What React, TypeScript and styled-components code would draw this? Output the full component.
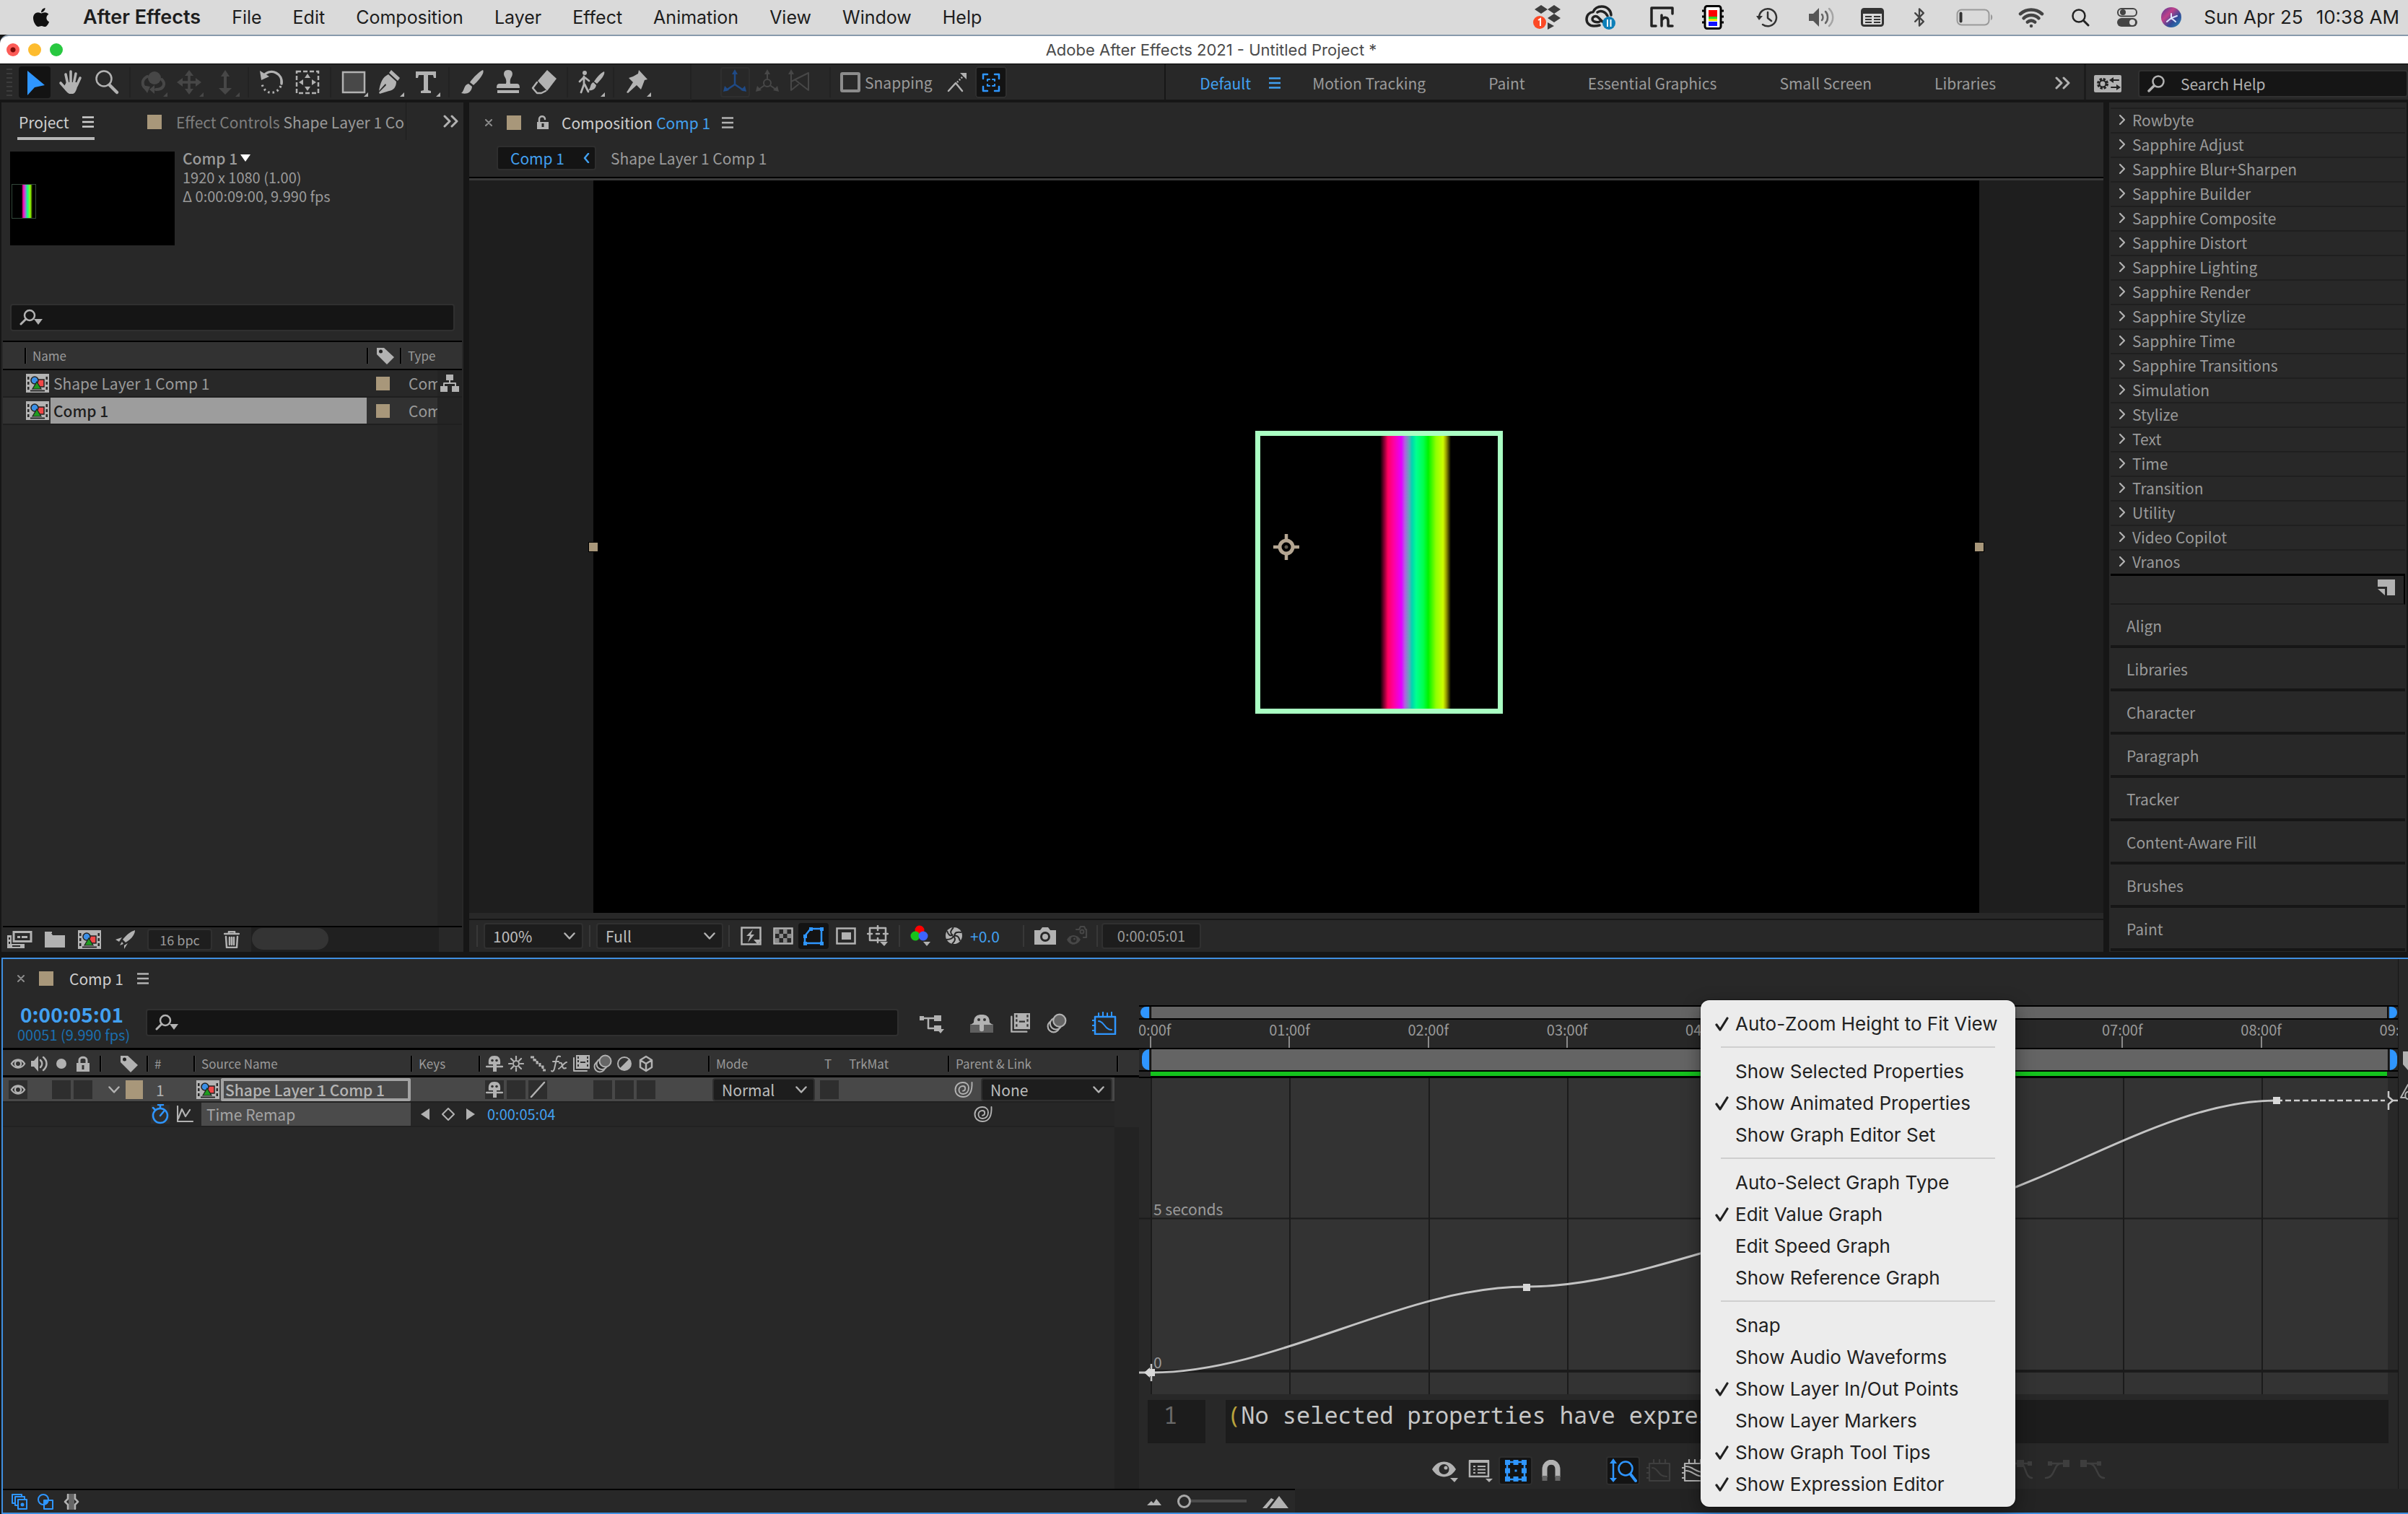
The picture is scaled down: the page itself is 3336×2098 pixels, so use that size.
import React, { ReactNode } from "react";
import styled, { createGlobalStyle, css } from "styled-components";
import { FaApple } from "react-icons/fa";
import { Bluetooth, Wifi } from "lucide-react";

const ui = `"Noto Sans CJK SC", "Noto Sans", sans-serif`;
const mac = `Inter, "Liberation Sans", sans-serif`;

const c = {
  panel: "#282828",
  gap: "#161616",
  head: "#323232",
  text: "#9a9a9a",
  bright: "#cfcfcf",
  icon: "#b2b2b2",
  dim: "#474747",
  blue: "#42a0f0",
  accent: "#2f96ff",
  frame: "#3f8fe0",
  tan: "#a8977a",
};

const Global = createGlobalStyle`
  *, *::before, *::after { box-sizing: border-box; }
  body { margin: 0; background: ${c.gap}; color: ${c.text}; font: 21px/26px ${ui}; }
  button, input, select, table { font: inherit; color: inherit; }
  button { border: 0; margin: 0; padding: 0; background: none; text-align: left; white-space: nowrap; }
  ul { list-style: none; margin: 0; padding: 0; }
  svg { display: block; flex: none; }
`;

const Shell = styled.div`
  display: flex;
  flex-direction: column;
  height: 100vh;
  overflow: hidden;
`;

/* ---------- system menu bar ---------- */

const MenuBar = styled.nav`
  display: flex;
  align-items: center;
  height: 48px;
  flex: none;
  padding: 0 12px 1px 42px;
  background: #dadada;
  color: #1d1d1d;
  font: 26px/30px ${mac};
`;
const Menus = styled.div`
  display: flex;
  align-items: baseline;
  gap: 43px;
  margin-left: 43px;
  flex: 1;
  font-size: 25px;
`;
const MenuButton = styled.button<{ $bold?: boolean }>`
  font-size: ${(p) => (p.$bold ? 27 : 25)}px;
  font-weight: ${(p) => (p.$bold ? 600 : 400)};
`;
const Status = styled.span<{ $gap: number }>`
  display: flex;
  margin-left: ${(p) => p.$gap}px;
  white-space: nowrap;
`;
const TitleBar = styled.header`
  display: grid;
  grid-template-columns: 1fr auto 1fr;
  align-items: center;
  height: 40px;
  flex: none;
  padding: 0 0 1px 20px;
  border-top: 2px solid #8799ab;
  border-top-left-radius: 12px;
  background: #fff;
  color: #4b4b4b;
  font: 22px/28px ${mac};
`;
const Lights = styled.div`
  display: flex;
  gap: 12px;
  margin-left: -11px;
`;
const Light = styled.button<{ $color: string; $dot?: boolean }>`
  width: 18px;
  height: 18px;
  border-radius: 50%;
  background: ${(p) =>
    p.$dot ? `radial-gradient(circle, #7a0a08 3px, ${p.$color} 4px)` : p.$color};
`;

/* ---------- tool bar ---------- */

const ToolBar = styled.div`
  display: flex;
  align-items: center;
  height: 50px;
  flex: none;
  border-top: 1px solid #000;
  background: ${c.panel};
`;
const Grip = styled.span`
  width: 8px;
  height: 38px;
  margin: 0 6px 0 9px;
  background: repeating-linear-gradient(#3c3c3c 0 2px, transparent 2px 6px);
`;
const Tool = styled.button<{ $on?: boolean; $dim?: boolean; $narrow?: boolean; $boxed?: boolean }>`
  display: flex;
  justify-content: center;
  align-items: center;
  flex: none;
  width: ${(p) => (p.$narrow ? 45 : 50)}px;
  height: 46px;
  color: ${(p) => (p.$on ? c.accent : p.$dim ? c.dim : c.icon)};
  > svg {
    border-radius: 4px;
    background: ${(p) => (p.$on ? "#131313" : "none")};
    box-shadow: ${(p) => (p.$boxed ? "inset 0 0 0 2px #2f2f2f" : "none")};
  }
`;
const Sep = styled.span<{ $w?: number; $h?: number; $c?: string }>`
  display: flex;
  justify-content: center;
  flex: none;
  width: ${(p) => p.$w || 14}px;
  height: ${(p) => p.$h || 42}px;
  &::before {
    content: "";
    width: 2px;
    background: ${(p) => p.$c || "#222"};
  }
`;
const Snapping = styled.label`
  display: flex;
  align-items: center;
  gap: 6px;
  margin-right: 20px;
`;
const Check = styled.input`
  appearance: none;
  width: 28px;
  height: 28px;
  margin: 0;
  border: 4px solid #8c8c8c;
  border-radius: 3px;
`;
const Workspaces = styled.div`
  display: flex;
  align-items: center;
  align-self: stretch;
  gap: 87px;
  margin-left: auto;
  padding: 2px 18px 0 47px;
  border-left: 2px solid #171717;
`;
const WsButton = styled.button<{ $on?: boolean; $more?: boolean }>`
  display: flex;
  align-items: center;
  gap: 25px;
  margin-right: ${(p) => (p.$on ? -43 : 0)}px;
  margin-left: ${(p) => (p.$more ? -5 : 0)}px;
  color: ${(p) => (p.$on ? c.blue : c.text)};
`;
const HelpArea = styled.div`
  display: flex;
  align-items: center;
  align-self: stretch;
  gap: 23px;
  width: 449px;
  padding: 4px 0 0 11px;
  border-left: 3px solid #1c1c1c;
`;
const Field = styled.label<{ $h: number; $pad?: number }>`
  display: flex;
  align-items: center;
  flex: 1;
  gap: 22px;
  height: ${(p) => p.$h}px;
  padding-left: ${(p) => p.$pad || 11}px;
  border: 2px solid #303030;
  border-radius: 4px;
  background: #151515;
`;
const FieldInput = styled.input`
  flex: 1;
  min-width: 0;
  padding: 0;
  border: 0;
  outline: 0;
  background: none;
  &::placeholder {
    color: #b0b0b0;
    opacity: 1;
  }
`;

/* ---------- workspace ---------- */

const Workspace = styled.main`
  display: grid;
  grid-template-columns: 640px minmax(0, 1fr) 412px;
  gap: 8px;
  flex: 1;
  min-height: 0;
  margin: 4px 2px 8px;
`;
const Panel = styled.section`
  display: flex;
  flex-direction: column;
  min-width: 0;
  min-height: 0;
  background: ${c.panel};
`;
const ProjectTabs = styled.div`
  display: flex;
  height: 52px;
  padding-left: 22px;
`;
const ProjectTab = styled.button`
  display: flex;
  align-items: center;
  gap: 18px;
  width: 107px;
  padding: 5px 0 0 2px;
  border-bottom: 4px solid #b8b8b8;
  color: ${c.bright};
`;
const EffectTab = styled.button`
  display: flex;
  align-items: center;
  gap: 20px;
  width: 359px;
  margin: 0 0 0 73px;
  padding-top: 2px;
  overflow: hidden;
  border-right: 1px solid #1d1d1d;
`;
const Swatch = styled.span<{ $w?: number; $h?: number }>`
  flex: none;
  width: ${(p) => p.$w || 20}px;
  height: ${(p) => p.$h || 20}px;
  background: ${c.tan};
`;
const Soft = styled.span`
  color: #7e7e7e;
`;
const MoreTabs = styled.button`
  display: flex;
  align-items: center;
  margin-left: 51px;
`;
const ItemInfo = styled.div`
  display: flex;
  gap: 11px;
  height: 212px;
  padding: 16px 0 0 12px;
`;
const Thumb = styled.div`
  width: 228px;
  height: 130px;
  padding: 45px 0 0 2px;
  background: #000;
`;
const ThumbShape = styled.div`
  width: 34px;
  height: 48px;
  border: 1px solid #33483b;
  background: linear-gradient(90deg, #000 13px, #f0a 15px, #a6d 18px, #1f8 21px, #9f0 25px, #000 28px);
`;
const InfoLines = styled.div`
  font-size: 20px;
  line-height: 26px;
  margin-top: -5px;
`;
const InfoTitle = styled.button`
  display: flex;
  align-items: center;
  gap: 4px;
  height: 28px;
  font-size: 21px;
  font-weight: 500;
`;
const SearchRow = styled.div`
  display: flex;
  height: 66px;
  padding: 15px 12px 0;
`;
const ProjectTable = styled.table`
  width: 636px;
  margin: 0 2px;
  border-collapse: collapse;
  table-layout: fixed;
`;
const HeadRow = styled.tr`
  height: 39px;
  background: ${c.head};
  border-top: 2px solid #000;
  border-bottom: 2px solid #000;
  font-size: 17px;
`;
const Th = styled.th<{ $pad?: number }>`
  padding: 0 0 0 ${(p) => p.$pad || 0}px;
  font-weight: 400;
`;
const BarCell = styled.span<{ $gap?: number }>`
  display: flex;
  align-items: center;
  gap: ${(p) => p.$gap || 8}px;
  &::before {
    content: "";
    width: 3px;
    height: 22px;
    background: #000;
    border-right: 1px solid #444;
  }
`;
const ItemRow = styled.tr<{ $on?: boolean }>`
  height: 38px;
  border-bottom: 2px solid #1f1f1f;
  background: ${(p) => (p.$on ? "linear-gradient(90deg, #313131 602px, #242424 602px)" : "linear-gradient(90deg, #282828 602px, #242424 602px)")};
`;
const Td = styled.td<{ $pad?: number; $hi?: boolean }>`
  padding: 0 0 0 ${(p) => p.$pad || 0}px;
  overflow: hidden;
  white-space: nowrap;
  ${(p) =>
    p.$hi &&
    css`
      background: #9d9d9d;
      color: #1e1e1e;
      font-weight: 500;
    `}
`;
const ListSpace = styled.div`
  flex: 1;
  margin: 0 2px;
  border-right: 34px solid #242424;
`;
const ProjectFooter = styled.div`
  display: flex;
  align-items: center;
  gap: 16px;
  height: 36px;
  margin: 0 2px;
  padding-left: 6px;
  border-top: 2px solid #000;
  font-size: 18px;
`;
const Depth = styled.button`
  width: 90px;
  height: 30px;
  border: 2px solid #303030;
  border-radius: 4px;
  background: #1e1e1e;
  font-size: 18px;
  text-align: center;
`;
const HScroll = styled.div`
  align-self: stretch;
  width: 260px;
  padding: 1px;
  background: #202020;
  &::before {
    content: "";
    display: block;
    width: 106px;
    height: 30px;
    border-radius: 15px;
    background: #343434;
  }
`;

/* ---------- composition viewer ---------- */

const ViewerTabs = styled.div`
  display: flex;
  align-items: center;
  height: 56px;
  padding-left: 22px;
`;
const Title = styled.h2<{ $before: number; $after: number }>`
  margin: 0 ${(p) => p.$after}px 0 ${(p) => p.$before}px;
  font: inherit;
  color: ${c.bright};
  em {
    margin-left: 5px;
    font-style: normal;
    color: ${c.blue};
  }
`;
const Gap = styled.span<{ $w: number }>`
  flex: none;
  width: ${(p) => p.$w}px;
`;
const Crumbs = styled.div`
  display: flex;
  align-items: center;
  gap: 20px;
  height: 52px;
  padding: 0 0 8px 38px;
  border-bottom: 3px solid #3a3a3a;
  box-shadow: inset 0 -2px #000;
`;
const Crumb = styled.button`
  display: flex;
  align-items: center;
  justify-content: space-between;
  width: 138px;
  height: 34px;
  padding: 0 7px 0 17px;
  border: 2px solid #2e2e2e;
  border-radius: 4px;
  background: #141414;
  color: ${c.blue};
`;
const Viewport = styled.div`
  display: flex;
  justify-content: center;
  flex: 1;
  min-height: 0;
  background: #1e1e1e;
`;
const Stage = styled.div`
  position: relative;
  width: 1920px;
  max-width: 100%;
  background: #000;
`;
const ShapeLayer = styled.div`
  position: absolute;
  left: calc(50% - 43px);
  top: calc(50% - 161px);
  width: 343px;
  height: 392px;
  padding-left: 166px;
  border: 7px solid #aaffc3;
`;
const Spectrum = styled.div`
  width: 98px;
  height: 100%;
  background: linear-gradient(90deg, #000 0%, #ff0060 11%, #ff00a0 19%, #e400ff 30%, #b060e0 35%, #60a8b8 41%, #00d4b0 45%, #00ff90 51%, #00ff50 61%, #00f400 68%, #90ff00 79%, #ccff00 89%, #a0a800 93%, #000 100%);
`;
const Handle = styled.span<{ $side: "left" | "right" }>`
  position: absolute;
  ${(p) => p.$side}: -7px;
  top: calc(50% - 7px);
  width: 14px;
  height: 14px;
  border: 1px solid #000;
  background: ${c.tan};
`;
const AnchorPoint = styled.svg`
  position: absolute;
  left: calc(50% - 19px);
  top: calc(50% - 19px);
`;
const ViewerBar = styled.div`
  display: flex;
  align-items: center;
  height: 54px;
  padding: 9px 0 0 2px;
  background: linear-gradient(#282828 8px, #161616 8px 10px, #282828 10px);
`;
const SelectBox = styled.span<{ $w: number; $h?: number }>`
  display: grid;
  align-items: center;
  width: ${(p) => p.$w}px;
  height: ${(p) => p.$h || 36}px;
  border: 2px solid #303030;
  border-radius: 4px;
  background: #1d1d1d;
  color: #bdbdbd;
  > * {
    grid-area: 1 / 1;
  }
  > svg {
    justify-self: end;
    margin-right: 9px;
    pointer-events: none;
  }
`;
const Select = styled.select`
  appearance: none;
  width: 100%;
  padding: 0 0 0 11px;
  border: 0;
  background: none;
`;
const ViewButton = styled.button<{ $on?: boolean; $w?: number; $dim?: boolean }>`
  display: flex;
  justify-content: center;
  align-items: center;
  width: ${(p) => p.$w || 40}px;
  height: 36px;
  border-radius: 4px;
  background: ${(p) => (p.$on ? "#131313" : "none")};
  color: ${(p) => (p.$on ? c.accent : p.$dim ? c.dim : c.icon)};
`;
const Exposure = styled.button`
  width: 52px;
  color: ${c.blue};
`;
const TimeBox = styled.button`
  width: 138px;
  height: 36px;
  border: 2px solid #303030;
  border-radius: 4px;
  background: #1d1d1d;
  font-size: 20px;
  text-align: center;
`;

/* ---------- right column ---------- */

const EffectList = styled.ul`
  margin: 7px 2px 0;
  border-bottom: 3px solid #000;
`;
const EffectButton = styled.button`
  display: flex;
  align-items: center;
  gap: 10px;
  width: 100%;
  height: 34px;
  padding: 0 0 3px 12px;
  border-top: 2px solid #1f1f1f;
`;
const PresetBar = styled.div`
  display: flex;
  justify-content: flex-end;
  align-items: center;
  height: 40px;
  margin: 0 2px;
  padding: 0 12px 6px 0;
  border-right: 2px solid #000;
  border-bottom: 2px solid #1c1c1c;
`;
const StackButton = styled.button`
  width: calc(100% - 4px);
  height: 60px;
  margin: 0 2px;
  padding: 2px 0 0 22px;
  border-bottom: 4px solid #161616;
`;

/* ---------- timeline ---------- */

const Timeline = styled.section`
  position: relative;
  flex: none;
  display: flex;
  flex-direction: column;
  margin-left: 2px;
  border: 2px solid ${c.frame};
  border-right: 0;
  background: ${c.panel};
`;
const TimelineBody = styled.div`
  display: grid;
  grid-template-columns: 1574px minmax(0, 1fr) 13px;
`;
const TimelineTabs = styled.div`
  display: flex;
  align-items: center;
  height: 54px;
  padding-left: 20px;
`;
const Layers = styled.div`
  display: flex;
  flex-direction: column;
`;
const ClockRow = styled.div`
  display: flex;
  align-items: center;
  height: 69px;
  padding-right: 31px;
`;
const Clock = styled.div`
  width: 198px;
  padding: 0 0 1px 20px;
  font-size: 20px;
  line-height: 24px;
  color: #1b6fae;
`;
const ClockMain = styled.button`
  display: block;
  margin-left: 4px;
  height: 33px;
  font-size: 28px;
  line-height: 32px;
  font-weight: 700;
  color: ${c.blue};
`;
const LayerSearch = styled.div`
  display: flex;
  width: 1043px;
  margin: 0 29px 0 0;
  padding-bottom: 1px;
`;
const LayerTools = styled.div`
  display: flex;
  flex: 1;
  justify-content: space-between;
  align-items: center;
  color: ${c.icon};
`;
const ToolTrio = styled.div`
  display: flex;
  align-items: center;
  gap: 22px;
`;
const cols = `134px 65px 65px 301px 94px 318px 332px 234px 1fr`;
const ColumnHead = styled.div`
  display: grid;
  grid-template-columns: ${cols};
  align-items: center;
  height: 41px;
  padding-top: 2px;
  border-top: 3px solid #000;
  border-bottom: 3px solid #000;
  background: ${c.head};
  font-size: 17px;
`;
const Cells = styled.span<{ $pad?: number }>`
  display: flex;
  align-items: center;
  padding-left: ${(p) => p.$pad || 0}px;
`;
const Cell = styled.button<{ $box?: boolean }>`
  display: flex;
  justify-content: center;
  align-items: center;
  width: 26px;
  height: 26px;
  margin: 0 2px;
  color: ${c.icon};
  background: ${(p) => (p.$box ? "#2e2e2e" : "none")};
`;
const LayerRow = styled.div`
  display: grid;
  grid-template-columns: ${cols};
  align-items: center;
  height: 33px;
  margin: 0 34px 0 0;
  background: #484848;
  color: #b4b4b4;
`;
const NameInput = styled.input`
  width: 263px;
  height: 32px;
  margin-left: 2px;
  padding: 0 2px;
  border: 4px solid #a3a3a3;
  border-radius: 2px;
  outline: 0;
  background: #484848;
  font-weight: 500;
`;
const PropRow = styled.div`
  display: flex;
  align-items: center;
  height: 36px;
  margin-right: 34px;
  padding-left: 203px;
  border-top: 2px solid #212121;
  border-bottom: 2px solid #212121;
  background: #262626;
  color: ${c.icon};
`;
const PropName = styled.button`
  width: 290px;
  height: 32px;
  margin: 0 14px 0 10px;
  padding-left: 7px;
  background: #4b4b4b;
  color: #a4a4a4;
`;
const Keys = styled.div`
  display: flex;
  align-items: center;
  justify-content: space-between;
  width: 75px;
  margin-right: 17px;
`;
const Value = styled.button`
  width: 674px;
  font-size: 20px;
  color: ${c.blue};
`;
const LayerSpace = styled.div`
  flex: 1;
  border-right: 34px solid #232323;
`;
const Graph = styled.div`
  display: flex;
  flex-direction: column;
  min-width: 0;
  padding-top: 64px;
  border-right: 1px solid #161616;
`;
const NavBar = styled.div<{ $h: number; $work?: boolean }>`
  display: flex;
  height: ${(p) => p.$h}px;
  padding: 0 1px 0 ${(p) => (p.$work ? 4 : 2)}px;
  border-top: 2px solid #000;
  border-bottom: 2px solid #000;
`;
const End = styled.span<{ $right?: boolean; $w: number }>`
  width: ${(p) => p.$w}px;
  background: ${c.accent};
  border-radius: ${(p) => (p.$right ? "0 10px 10px 0" : "10px 0 0 10px")};
`;
const Span = styled.span`
  flex: 1;
  margin: 0 2px;
  border: 0 solid #000;
  border-width: 0 1px;
  background: #646464;
`;
const Ruler = styled.div`
  height: 39px;
  overflow: hidden;
`;
const Ticks = styled.div`
  display: grid;
  grid-template-columns: repeat(10, 1fr);
  margin: 0 -99px 0 -80px;
`;
const Tick = styled.span`
  display: flex;
  flex-direction: column;
  align-items: center;
  font-size: 20px;
  line-height: 28px;
  &::after {
    content: "";
    width: 2px;
    height: 16px;
    margin-top: -5px;
    background: #8a8a8a;
  }
`;
const Cache = styled.div`
  height: 7px;
  margin: 0 15px 0 16px;
  border-bottom: 1px solid #000;
  background: #15c21e;
`;
const ChartBox = styled.div`
  height: 440px;
  border-top: 2px solid #000;
`;
const Expression = styled.div`
  display: flex;
  gap: 28px;
  height: 60px;
  margin: 8px 13px 0 12px;
  font: 32px/42px "Noto Sans Mono", "Liberation Mono", monospace;
`;
const LineNo = styled.span`
  width: 80px;
  padding-left: 22px;
  background: #1c1c1c;
  color: #6a6a6a;
`;
const Code = styled.code`
  flex: 1;
  padding-left: 2px;
  background: #1c1c1c;
  color: #c6c6c6;
  font: inherit;
  white-space: nowrap;
  overflow: hidden;
  b {
    font-weight: 400;
    color: #b8a23c;
  }
`;
const GraphTools = styled.div`
  display: flex;
  justify-content: center;
  align-items: center;
  height: 63px;
  padding-top: 12px;
`;
const GraphTool = styled.button<{ $on?: boolean; $dim?: boolean }>`
  display: flex;
  justify-content: center;
  align-items: center;
  width: 47px;
  height: 40px;
  margin: 0 1px;
  border-radius: 4px;
  border: ${(p) => (p.$on ? "2px solid #2e2e2e" : "0")};
  background: ${(p) => (p.$on ? "#131313" : "none")};
  color: ${(p) => (p.$on ? c.accent : p.$dim ? "#3e3e3e" : c.icon)};
`;
const SideStrip = styled.div`
  display: flex;
  flex-direction: column;
  align-items: flex-end;
  padding-top: 128px;
  gap: 18px;
  color: ${c.icon};
  overflow: hidden;
`;
const BottomBar = styled.div`
  display: flex;
  height: 33px;
  background: #232323;
`;
const BottomLeft = styled.div`
  display: flex;
  align-items: center;
  gap: 14px;
  width: 1790px;
  padding: 0 9px 0 12px;
  border-top: 2px solid #000;
  background: ${c.panel};
  color: ${c.accent};
`;
const Zoom = styled.label`
  display: flex;
  align-items: center;
  gap: 22px;
  margin-left: auto;
  color: ${c.icon};
`;
const ZoomRange = styled.input`
  appearance: none;
  width: 96px;
  height: 20px;
  margin: 0;
  background: linear-gradient(transparent 7px, #4a4a4a 7px 11px, transparent 11px);
  &::-webkit-slider-thumb {
    appearance: none;
    width: 19px;
    height: 19px;
    border: 3px solid #a8a8a8;
    border-radius: 50%;
    background: #282828;
  }
`;

/* ---------- pop-up menu ---------- */

const Popup = styled.ul`
  position: absolute;
  left: 2352px;
  bottom: 8px;
  width: 436px;
  padding: 10px 0;
  border-radius: 12px;
  background: #ececec;
  box-shadow: 0 0 2px #000, 0 8px 26px rgba(0, 0, 0, 0.4);
  color: #212121;
  font: 26px/42px ${mac};
`;
const PopupItem = styled.button`
  display: grid;
  grid-template-columns: 28px 1fr;
  align-items: center;
  width: 100%;
  height: 44px;
  padding: 2px 0 0 20px;
`;
const PopupRule = styled.li`
  display: flex;
  align-items: center;
  height: 22px;
  padding: 0 28px;
  &::before {
    content: "";
    flex: 1;
    height: 2px;
    background: #cfcfcf;
  }
`;

/* ---------- drawings ---------- */

type SvgProps = { w: number; h: number; box?: string; children: ReactNode; color?: string };
const Svg = ({ w, h, box, children, color }: SvgProps) => (
  <svg width={w} height={h} viewBox={box || `0 0 ${w} ${h}`} fill="none" stroke="none" color={color} aria-hidden="true">
    {children}
  </svg>
);
const P = ({ d, s, f, k }: { d: string; s?: number; f?: boolean; k?: string }) => (
  <path d={d} stroke={s ? k || "currentColor" : "none"} strokeWidth={s} fill={f || !s ? k || "currentColor" : "none"} strokeLinecap="round" strokeLinejoin="round" />
);
const Burger = ({ color = c.icon, w = 16 }) => (
  <Svg w={w} h={16} color={color}><path d={`M0 1.5H${w}M0 8H${w}M0 14.500H${w}`} stroke="currentColor" strokeWidth="2.500" /></Svg>
);
const CloseX = () => <Svg w={10} h={10} color="#8c8c8c"><P s={2} d="M1 1l8 8M9 1l-8 8" /></Svg>;
const DoubleChevron = () => <Svg w={22} h={18} color={c.icon}><P s={3} d="M2 2l7 7-7 7M12 2l7 7-7 7" /></Svg>;
const ChevronDown = () => <Svg w={16} h={10} color={c.icon}><P s={2.5} d="M1.500 1.500l6.500 7 6.500-7" /></Svg>;
const SearchMenu = () => (
  <Svg w={32} h={24} color={c.icon}>
    <circle cx="14" cy="9" r="7" stroke="currentColor" strokeWidth="2.500" />
    <P s={3} d="M9 14l-7 7" /><P d="M20 14h12l-6 8z" />
  </Svg>
);
const Magnifier = () => (
  <Svg w={24} h={24} color={c.icon}><circle cx="15" cy="9" r="7.500" stroke="currentColor" strokeWidth="2.500" /><P s={3.5} d="M9 15l-7 7" /></Svg>
);
const Tag = () => (
  <Svg w={26} h={24} color={c.icon}><path d="M1 1h10l14 13-10 10L1 10z" fill="currentColor" /><circle cx="6.500" cy="6" r="2.500" fill="#222" /></Svg>
);
const CompIcon = ({ w = 32, h = 26 }) => (
  <Svg w={w} h={h} box="0 0 32 26">
    <path d="M0 0h32v26H0z" fill="#b4b4b4" />
    <path d="M2 4h2.500v4H2zM2 11h2.500v4H2zM2 18h2.500v4H2zM27.500 4h2.500v4h-2.500zM27.500 11h2.500v4h-2.500zM27.500 18h2.500v4h-2.500z" fill="#282828" />
    <path d="M6 22.500h20v2H6z" fill="#282828" />
    <rect x="14" y="8" width="11" height="10" fill="#f04848" stroke="#222" strokeWidth="1.500" />
    <circle cx="12" cy="9" r="5" fill="#3b8fe6" stroke="#222" strokeWidth="1.500" />
    <path d="M15 11l6 10H9z" fill="#1f9a1f" stroke="#222" strokeWidth="1.200" />
  </Svg>
);
const FlowIcon = () => (
  <Svg w={26} h={24} color={c.icon}><P d="M8 0h10v8H8zM0 16h10v8H0zM16 16h10v8H16z" /><P s={2} d="M13 8v4M5 16v-4h16v4" /></Svg>
);
const Eye = ({ s = 24 }) => (
  <Svg w={s} h={s} box="0 0 24 24"><P s={2.5} d="M2 12c5-8 15-8 20 0-5 8-15 8-20 0z" /><circle cx="12" cy="12" r="4.500" stroke="currentColor" strokeWidth="2.500" /></Svg>
);
const Spiral = () => (
  <Svg w={26} h={24} color={c.icon}>
    <P s={1.9} d="M24.500 2C25 13 22 22 12.500 22 6 22 1.500 18 1.500 12S6 2 12 2c5 0 8 3 8 7.500 0 5-3 8.500-7.500 8.500C9 18 6.500 16 6.500 12.500S9 7 12 7c2 0 3.200 1.200 3.200 3 0 2.200-1.200 3.700-3.200 3.700" />
  </Svg>
);
const Shy = () => (
  <Svg w={24} h={24}><P d="M4 13C3 4 6 1 12 1s9 3 8 12h-5v10h-5V13z" /><P s={2.5} d="M1 16h8M15 16h8" /><circle cx="9" cy="7.500" r="1.800" fill="#333" /><circle cx="15" cy="7.500" r="1.800" fill="#333" /></Svg>
);
const FilmFrames = ({ w = 24, h = 24 }) => (
  <Svg w={w} h={h} box="0 0 24 24">
    <P s={2} d="M2 4v18h18" /><P d="M5 0h19v19H5z" />
    <P k="#333" d="M7 2h2v3H7zM7 7h2v3H7zM7 13h2v3H7zM20 2h2v3h-2zM20 7h2v3h-2zM20 13h2v3h-2zM11 9h7v2h-7z" />
  </Svg>
);
const Blur = ({ s = 26 }) => (
  <Svg w={s} h={s} box="0 0 26 26">
    <circle cx="9" cy="17" r="7.500" stroke="currentColor" strokeWidth="2" /><circle cx="12" cy="13.500" r="7.500" fill="#282828" stroke="currentColor" strokeWidth="2" />
    <circle cx="16.500" cy="9.500" r="8" fill="#666" stroke="currentColor" strokeWidth="2" />
  </Svg>
);
const Cube = () => <Svg w={20} h={24}><P s={2.5} d="M10 2l8 5v10l-8 5-8-5V7zM2 7l8 5 8-5M10 12v10" /></Svg>;
const GraphIcon = () => (
  <Svg w={34} h={32} color={c.accent}><P s={2.5} d="M4 7h28v24H4z" /><P s={2} d="M9 2v5M15 0v7M21 2v5M27 0v7M0 12h4M0 19h4M0 26h4M9 13c8 0 8 12 18 12" /></Svg>
);
const Tri = () => <path d="M38 32v6h-6z" fill="currentColor" />;
const T44 = ({ children }: { children: ReactNode }) => <Svg w={44} h={44} box="-4 -4 44 44">{children}</Svg>;

const toolArt: Record<string, ReactNode> = {
  Selection: <path d="M8 2l24 20-14 3-10 11z" fill="currentColor" />,
  Hand: <><P s={3.6} d="M11 7l3 14M18 3v18M25 6l-3 15M31 12l-5 11M4 19l8 9" /><P d="M12 18h14l1 6c-1 6-4 10-6 10h-5c-4-2-6-6-8-9z" /></>,
  Zoom: <><circle cx="14" cy="13" r="10.500" stroke="currentColor" strokeWidth="2.500" /><P s={4.5} d="M22 22l10 10" /></>,
  Orbit: <><circle cx="20" cy="12" r="9" fill="currentColor" /><P s={4} d="M10 10C2 14 2 22 8 27M30 14c6 6 3 14-8 14" /><P d="M2 22l12 2-4 9zM20 22v12l-7-6z" /><Tri /></>,
  Pan: <><P s={3.5} d="M18 5v26M5 18h26" /><P d="M18 1l6 8H12zM18 35l6-8H12zM1 18l8-6v12zM35 18l-8-6v12z" /><Tri /></>,
  Dolly: <><P s={4} d="M18 6v24" /><P d="M18 1l6 9H12zM18 35l9-9H9z" /><Tri /></>,
  Rotate: <><P s={3.5} d="M8 8C18-2 34 6 32 20" /><P d="M2 2l2 13 11-5z" /><path d="M31 23C26 36 8 36 5 20" stroke="currentColor" strokeWidth="3.200" strokeDasharray="2.500 4" /></>,
  "Pan Behind": <><path d="M3 3h30v30H3z" stroke="currentColor" strokeWidth="2.500" strokeDasharray="6 3" /><P d="M18 6l4 6h-8zM18 30l4-6h-8zM6 18l6-4v8zM30 18l-6-4v8z" /></>,
  Rectangle: <><path d="M3 4h30v28H3z" fill="#484848" stroke="currentColor" strokeWidth="2.500" /><Tri /></>,
  Pen: <><P d="M20 1l12 11-3 4-12-11zM16 7l11 10c0 8-4 12-10 13L4 34l-1-2 10-10-1-2L3 30c2-12 5-19 13-23z" /><Tri /></>,
  Type: <><P d="M4 3h28v9h-3l-1-4h-7v21l4 1v3H11v-3l4-1V8H8l-1 4H4z" /><Tri /></>,
  Brush: <><P d="M33 1c3 4-6 15-13 21l-5-4C20 11 28 3 33 1zM13 20l5 4c-1 9-8 11-15 9 5-4 3-11 10-13z" /></>,
  Stamp: <P d="M18 1c6 0 7 5 5 9-2 3-3 6-2 10h9c3 0 4 2 4 6H2c0-4 1-6 4-6h9c1-4 0-7-2-10-2-4-1-9 5-9zM3 29h30v4H3z" />,
  Eraser: <><P d="M22 1l13 12-13 17L9 16z" /><P s={2.5} d="M8 18l-6 8 6 7h6l6-3" /></>,
  Roto: <><circle cx="10" cy="5" r="3" fill="currentColor" /><P s={2.8} d="M9 10v11l-4 11M10 21l5 10M9 11l-6 6M11 12l5 4" /><P d="M37 3c2 4-5 12-10 17l-4-3c4-6 9-12 14-14zM22 18l4 4c-1 6-6 8-11 7 4-3 2-9 7-11z" /><Tri /></>,
  Puppet: <><P d="M21 1l12 13-4 1-3 8-2 5-6-6L6 33l-2-1 9-14-6-6 6-2 7-4z" /><Tri /></>,
};
const groups: [string, boolean][][] = [
  [["Selection", false], ["Hand", false], ["Zoom", false]],
  [["Orbit", true], ["Pan", true], ["Dolly", true]],
  [["Rotate", false], ["Pan Behind", false]],
  [["Rectangle", false], ["Pen", false], ["Type", false]],
  [["Brush", false], ["Stamp", false], ["Eraser", false]],
  [["Roto", false]],
  [["Puppet", false]],
];

const effects = ["Rowbyte", "Sapphire Adjust", "Sapphire Blur+Sharpen", "Sapphire Builder", "Sapphire Composite", "Sapphire Distort", "Sapphire Lighting", "Sapphire Render", "Sapphire Stylize", "Sapphire Time", "Sapphire Transitions", "Simulation", "Stylize", "Text", "Time", "Transition", "Utility", "Video Copilot", "Vranos"];
const stack = ["Align", "Libraries", "Character", "Paragraph", "Tracker", "Content-Aware Fill", "Brushes", "Paint"];
const popup: [string, boolean][][] = [
  [["Auto-Zoom Height to Fit View", true]],
  [["Show Selected Properties", false], ["Show Animated Properties", true], ["Show Graph Editor Set", false]],
  [["Auto-Select Graph Type", false], ["Edit Value Graph", true], ["Edit Speed Graph", false], ["Show Reference Graph", false]],
  [["Snap", false], ["Show Audio Waveforms", false], ["Show Layer In/Out Points", true], ["Show Layer Markers", false], ["Show Graph Tool Tips", true], ["Show Expression Editor", true]],
];

function StatusIcons() {
  return (
    <>
      <Status $gap={0}><Svg w={38} h={34}>
        <g fill="#3d3d3d"><path d="M11 0l9 6-9 6-9-6zM29 0l9 6-9 6-9-6zM29 12l9 6-9 6-9-6zM20 24l9 5-9 5z" /></g>
        <circle cx="9" cy="24" r="9" fill="#fb4a26" /><path d="M7 21l3-2v10" stroke="#fff" strokeWidth="2" />
      </Svg></Status>
      <Status $gap={34}><Svg w={42} h={34}>
        <P s={3.5} k="#222" d="M20 28c-3 1-5 1-8 1C6 29 2 25 2 19.500S6 10 11 9.500C13 5 17 2 23 2c8 0 13 6 13 12M20 23c-2 1-4 1-7 0-3-1-4-4-2-6s5-2 7 0l6 6M17 10c5-3 11-1 14 5" />
        <circle cx="33" cy="25" r="9" fill="#0d7fb8" /><path d="M31 20v10M35.500 20v10" stroke="#fff" strokeWidth="2" />
      </Svg></Status>
      <Status $gap={48}><Svg w={33} h={30}><P s={3.5} k="#222" d="M31 2H2v25h6M31 10V2M16 27V12M16 19c3-5 9-5 9 1v7h6" /></Svg></Status>
      <Status $gap={39}><Svg w={30} h={34}><rect x="4" y="1.500" width="22" height="31" rx="3" fill="#fff" stroke="#000" strokeWidth="3" /><path d="M0 8h4M0 16h4M0 24h4M26 8h4M26 16h4M26 24h4" stroke="#000" strokeWidth="3" /><path d="M9 7h12v9H9z" fill="red" /><path d="M9 16h12v3H9z" fill="#2bd52b" /><path d="M9 19h12v3H9z" fill="#e8e000" /><path d="M9 23h12v6H9z" fill="#11f" /></Svg></Status>
      <Status $gap={45}><Svg w={30} h={28}><P s={2.5} k="#333" d="M4 14a12 12 0 1 1 5 10M16 7v8l5 4" /><P k="#333" d="M0 12h9l-5 6z" /></Svg></Status>
      <Status $gap={42}><Svg w={37} h={28}><P k="#555" d="M1 9h6l8-8v26l-8-8H1z" /><P s={2.5} k="#666" d="M19 10c2 2 2 6 0 8M24 6c4 4 4 12 0 16" /><P s={2.5} k="#a5a5a5" d="M29 2c7 7 7 17 0 24" /></Svg></Status>
      <Status $gap={36}><Svg w={32} h={26}><rect x="1.500" y="1.500" width="29" height="23" rx="3" stroke="#333" strokeWidth="3" /><path d="M2 2h28v6H2z" fill="#333" /><path d="M6 12h9M6 16h9M6 20h9M18 12h9M18 16h9M18 20h9" stroke="#333" strokeWidth="2" /></Svg></Status>
      <Status $gap={35}><Bluetooth size={28} strokeWidth={2} color="#444" /></Status>
      <Status $gap={37}><Svg w={51} h={24}><rect x="1.500" y="1.500" width="44" height="21" rx="6" stroke="#999" strokeWidth="2" /><path d="M48 8v8c3-1 3-7 0-8z" fill="#999" /><rect x="4.500" y="4.500" width="4" height="15" rx="2" fill="#333" /></Svg></Status>
      <Status $gap={35}><Wifi size={36} strokeWidth={3} color="#444" /></Status>
      <Status $gap={37}><Svg w={26} h={26}><circle cx="11" cy="11" r="8.500" stroke="#222" strokeWidth="2.500" /><P s={3} k="#222" d="M18 18l6 6" /></Svg></Status>
      <Status $gap={38}><Svg w={28} h={26}><rect x="1" y="1" width="26" height="10.500" rx="5" stroke="#444" strokeWidth="2" /><circle cx="8" cy="6" r="4" fill="#444" /><rect x="0" y="14" width="28" height="12" rx="6" fill="#444" /><circle cx="21" cy="20" r="4" fill="#dadada" /></Svg></Status>
      <Status $gap={33}><Svg w={28} h={28}>
        <defs><linearGradient id="siri" x1="0" y1="0" x2="1" y2="1"><stop offset="0" stopColor="#4a3a98" /><stop offset=".35" stopColor="#c0408a" /><stop offset=".65" stopColor="#304a98" /><stop offset="1" stopColor="#2890b8" /></linearGradient></defs>
        <circle cx="14" cy="14" r="14" fill="url(#siri)" /><P s={2} k="#dde6ff" d="M14 9v6M14 15l-6 5M14 15l6 5M14 15l8-3" />
      </Svg></Status>
      <Status $gap={31}>Sun Apr 25</Status>
      <Status $gap={18}>10:38 AM</Status>
    </>
  );
}

function TopBars() {
  return (
    <>
      <MenuBar>
        <FaApple size={30} color="#111" />
        <Menus>
          {["After Effects", "File", "Edit", "Composition", "Layer", "Effect", "Animation", "View", "Window", "Help"].map((m, i) => (
            <MenuButton key={m} $bold={i === 0}>{m}</MenuButton>
          ))}
        </Menus>
        <StatusIcons />
      </MenuBar>
      <TitleBar>
        <Lights>
          <Light $color="#fc5b57" $dot aria-label="Close" /><Light $color="#fdbc2f" aria-label="Minimize" /><Light $color="#28c840" aria-label="Full screen" />
        </Lights>
        <span>Adobe After Effects 2021 - Untitled Project *</span>
      </TitleBar>
      <ToolBar>
        <Grip />
        {groups.map((g, gi) => (
          <React.Fragment key={gi}>
            {gi > 0 && <Sep />}
            {g.map(([name, dim]) => (
              <Tool key={name} $on={name === "Selection"} $dim={dim} aria-label={name}><T44>{toolArt[name]}</T44></Tool>
            ))}
          </React.Fragment>
        ))}
        <Gap $w={48} /><Sep $w={4} $h={50} /><Gap $w={37} />
        <Tool $narrow $dim $boxed aria-label="Local axis"><Svg w={41} h={42} color="#1f4a86"><P s={2.5} d="M20 8v16l-12 8M20 24l12 8" /><P d="M20 3l4 7h-8zM4 34l2-8 6 6zM36 34l-2-8-6 6z" /></Svg></Tool>
        <Tool $narrow $dim aria-label="World axis"><Svg w={41} h={42}><circle cx="20" cy="22" r="5" stroke="currentColor" strokeWidth="2" /><P s={2} d="M20 8v8M15 26l-7 5M25 26l7 5" /><P d="M20 3l4 7h-8zM4 34l2-8 6 6zM36 34l-2-8-6 6z" /></Svg></Tool>
        <Tool $narrow $dim aria-label="View axis"><Svg w={41} h={42}><P s={2} d="M8 8v24M8 20l24-12v24L14 18M8 32l10-8" /><P d="M8 3l4 7H4z" /></Svg></Tool>
        <Gap $w={11} /><Sep $w={16} /><Gap $w={6} />
        <Snapping><Check type="checkbox" />Snapping</Snapping>
        <Svg w={28} h={28} color={c.icon}><P s={2.5} d="M2 26l10-11 9 11" /><path d="M14 14l9-9" stroke="currentColor" strokeWidth="2.500" strokeDasharray="2 2" /><P d="M18 1h9v9z" /></Svg>
        <Gap $w={8} />
        <Tool $on $boxed aria-label="Snap to features"><Svg w={44} h={44}><P s={2.5} d="M11 17v-6h6M33 17v-6h-6M11 28v6h6M33 28v6h-6" /><P s={2.2} d="M17 20v-2h3M27 20v-2h-3M17 25v2h3M27 25v2h-3" /></Svg></Tool>
        <Workspaces>
          <WsButton $on>Default<Burger color={c.blue} /></WsButton>
          {["Motion Tracking", "Paint", "Essential Graphics", "Small Screen", "Libraries"].map((w) => <WsButton key={w}>{w}</WsButton>)}
          <WsButton $more aria-label="More workspaces"><DoubleChevron /></WsButton>
        </Workspaces>
        <HelpArea>
          <Svg w={38} h={24}><rect width="38" height="24" rx="2" fill={c.icon} /><circle cx="12" cy="12" r="6" stroke="#222" strokeWidth="4" strokeDasharray="3 1.700" /><circle cx="12" cy="12" r="4.500" stroke="#222" strokeWidth="2" /><P s={2} k="#222" d="M25 7h9M24 17h9" /><P k="#222" d="M21 7l6-4v8zM37 17l-6-4v8z" /></Svg>
          <Field $h={38}><Magnifier /><FieldInput placeholder="Search Help" aria-label="Search Help" /></Field>
        </HelpArea>
      </ToolBar>
    </>
  );
}

function ProjectPanel() {
  const items: [string, boolean][] = [["Shape Layer 1 Comp 1", false], ["Comp 1", true]];
  return (
    <Panel>
      <ProjectTabs>
        <ProjectTab>Project<Burger color="#cfcfcf" /></ProjectTab>
        <EffectTab><Swatch /><span><Soft>Effect Controls</Soft> Shape Layer 1 Co</span></EffectTab>
        <MoreTabs aria-label="More tabs"><DoubleChevron /></MoreTabs>
      </ProjectTabs>
      <ItemInfo>
        <Thumb><ThumbShape /></Thumb>
        <InfoLines>
          <InfoTitle>Comp 1<Svg w={14} h={10} color="#fff"><P d="M0 0h14L7 10z" /></Svg></InfoTitle>
          <div>1920 x 1080 (1.00)</div>
          <div>Δ 0:00:09:00, 9.990 fps</div>
        </InfoLines>
      </ItemInfo>
      <SearchRow><Field $h={38}><SearchMenu /><FieldInput aria-label="Search project" /></Field></SearchRow>
      <ProjectTable>
        <colgroup><col width="66" /><col width="438" /><col width="46" /><col width="52" /><col width="34" /></colgroup>
        <thead>
          <HeadRow><Th colSpan={2} $pad={30} align="left"><BarCell>Name</BarCell></Th><Th><BarCell $gap={10}><Tag /></BarCell></Th><Th colSpan={2} align="left"><BarCell>Type</BarCell></Th></HeadRow>
        </thead>
        <tbody>
          {items.map(([name, on]) => (
            <ItemRow key={name} $on={on}>
              <Td $pad={32}><CompIcon /></Td>
              <Td $pad={4} $hi={on}>{name}</Td>
              <Td $pad={13}><Swatch $w={19} $h={19} as="div" /></Td>
              <Td $pad={12}>Comp</Td>
              <Td $pad={4}>{!on && <FlowIcon />}</Td>
            </ItemRow>
          ))}
        </tbody>
      </ProjectTable>
      <ListSpace />
      <ProjectFooter>
        <Svg w={36} h={24} color={c.icon}><path d="M9 1.500h24v13H9z" stroke="currentColor" strokeWidth="3" /><P d="M14 7h4v3h-4zM20 7h8v3h-8zM0 6h6v12h18v6H0z" /><P k="#282828" d="M2 9h2v3H2zM2 15h2v3H2zM7 20h11v2H7z" /></Svg>
        <Svg w={28} h={22} color={c.icon}><P d="M0 2h9l2 3h17v17H0zM0 0h10v2H0z" /></Svg>
        <CompIcon w={36} h={26} />
        <Svg w={30} h={26} color={c.icon}><P d="M29 0c0 8-8 14-13 17l-4-4C17 7 22 2 29 0zM11 10L2 13l5 3zM19 18l-5 3v5zM11 16l-3 5 5-2z" /></Svg>
        <Depth>16 bpc</Depth>
        <Svg w={22} h={24} color={c.icon}><P s={2.5} d="M1 4h20M7 4V1h8v3M3 8l1 15h14l1-15M8 9v10M11 9v10M14 9v10" /></Svg>
        <HScroll />
      </ProjectFooter>
    </Panel>
  );
}

function Viewer() {
  return (
    <Panel>
      <ViewerTabs>
        <CloseX /><Gap $w={20} /><Swatch /><Gap $w={21} />
        <Svg w={18} h={20} color={c.icon}><P d="M1 9h16v10H1z" /><P s={2.5} d="M4 9V5c0-5 8-5 8 0" /><path d="M9 11v5" stroke="#282828" strokeWidth="3" /></Svg>
        <Title $before={17} $after={16}>Composition<em>Comp 1</em></Title>
        <Burger />
      </ViewerTabs>
      <Crumbs>
        <Crumb>Comp 1<Svg w={9} h={14}><P s={2.5} d="M7 1L2 7l5 6" /></Svg></Crumb>
        <button>Shape Layer 1 Comp 1</button>
      </Crumbs>
      <Viewport>
        <Stage>
          <ShapeLayer><Spectrum /></ShapeLayer>
          <AnchorPoint width="38" height="38" viewBox="0 0 38 38">
            <circle cx="19" cy="19" r="9" fill="none" stroke="#b5a692" strokeWidth="5" /><path d="M19 1v10M19 27v10M1 19h10M27 19h10" stroke="#b5a692" strokeWidth="4.500" /><circle cx="19" cy="19" r="2.500" fill="#5c564c" />
          </AnchorPoint>
          <Handle $side="left" /><Handle $side="right" />
        </Stage>
      </Viewport>
      <ViewerBar>
        <Sep $w={18} $h={30} $c="#383838" />
        <SelectBox $w={138}><Select aria-label="Magnification"><option>100%</option></Select><ChevronDown /></SelectBox>
        <Sep $w={18} $h={30} $c="#383838" />
        <SelectBox $w={176}><Select aria-label="Resolution"><option>Full</option></Select><ChevronDown /></SelectBox>
        <Sep $w={16} $h={30} $c="#383838" />
        <ViewButton $w={46} aria-label="Fast previews"><Svg w={30} h={26}><path d="M1.500 1.500h26v23h-26z" stroke="currentColor" strokeWidth="2.500" /><P d="M17 4l-9 9h5l-3 9 9-11h-5z" /><P d="M18 18h11l-5 7z" /></Svg></ViewButton>
        <ViewButton $w={42} aria-label="Transparency grid"><Svg w={28} h={24}><path d="M1.500 1.500h25v21h-25z" stroke="currentColor" strokeWidth="2.500" /><path d="M3 3h5.500v6H3zM14 3h5.500v6H14zM8.500 9H14v6H8.500zM19.500 9H25v6h-5.500zM3 15h5.500v6H3zM14 15h5.500v6H14z" fill="#8a8a8a" /></Svg></ViewButton>
        <ViewButton $on $w={42} aria-label="Mask visibility"><Svg w={30} h={26}><P s={2.5} d="M3 23V13l8-10h15v20z" /><P d="M1 21h5v5H1zM24 21h5v5h-5zM24 1h5v5h-5zM9 1h5v5H9zM1 11h5v5H1z" /></Svg></ViewButton>
        <Gap $w={4} />
        <ViewButton aria-label="Region of interest"><Svg w={28} h={24}><path d="M1.500 1.500h25v21h-25z" stroke="currentColor" strokeWidth="2.500" /><P d="M8 7h13v10H8z" /></Svg></ViewButton>
        <ViewButton $w={48} aria-label="Grid options"><Svg w={30} h={30}><P s={2.5} d="M4 4h22v17H4zM15 1v6M15 18v6M1 12h6M23 12h6M13 12h4" /><P d="M18 23h11l-5 6z" /></Svg></ViewButton>
        <Sep $w={12} $h={30} $c="#383838" />
        <ViewButton $w={46} aria-label="Channels"><Svg w={28} h={30}><circle cx="13" cy="7" r="6.500" fill="#f00" /><circle cx="7" cy="15" r="6.500" fill="#17c31a" /><circle cx="18" cy="15" r="6.500" fill="#3d63ff" /><P d="M18 23h10l-5 6z" /></Svg></ViewButton>
        <ViewButton $w={46} aria-label="Reset exposure"><Svg w={25} h={25}><circle cx="12.500" cy="12.500" r="11.500" fill="currentColor" /><path d="M12 1c-5 6-5 8-1 11M23 8c-7-1-9 0-10 5M21 20c-2-7-4-8-9-7M10 24c5-5 5-7 2-11M2 18c7 0 9-2 10-5M3 6c2 6 4 7 8 6" stroke="#282828" strokeWidth="2" /></Svg></ViewButton>
        <Exposure>+0.0</Exposure>
        <Gap $w={20} /><Sep $w={4} $h={30} $c="#383838" /><Gap $w={6} />
        <ViewButton $w={44} aria-label="Take snapshot"><Svg w={30} h={24}><P d="M0 4h8l3-4h8l3 4h8v20H0z" /><circle cx="15" cy="13" r="5.500" stroke="#282828" strokeWidth="3" /></Svg></ViewButton>
        <ViewButton $w={44} $dim aria-label="Show snapshot"><Svg w={30} h={30}><P s={2.2} d="M14 6h4l2-4h5l2 4h1v11h-4" /><circle cx="22" cy="9" r="2.500" stroke="currentColor" strokeWidth="2" /><path d="M1 20c4-8 14-8 19 0-5 9-15 9-19 0z" fill="currentColor" /><circle cx="10.500" cy="20" r="4" fill="#282828" /><circle cx="11.500" cy="19" r="1.500" fill="currentColor" /></Svg></ViewButton>
        <Sep $w={12} $h={30} $c="#383838" />
        <TimeBox>0:00:05:01</TimeBox>
      </ViewerBar>
    </Panel>
  );
}

function SideColumn() {
  return (
    <Panel>
      <EffectList>
        {effects.map((e) => (
          <li key={e}><EffectButton><Svg w={8} h={14} color={c.icon}><P s={2.2} d="M1 1l6 6-6 6" /></Svg>{e}</EffectButton></li>
        ))}
      </EffectList>
      <PresetBar><Svg w={24} h={22} color={c.icon}><P d="M0 0h24v22H13V10H0z" /><P d="M0 13h10v9z" /></Svg></PresetBar>
      {stack.map((s) => <StackButton key={s}>{s}</StackButton>)}
    </Panel>
  );
}

const gridX = Array.from({ length: 9 }, (_, i) => 17 + Math.round(i * 192.4));

function ValueGraph() {
  return (
    <ChartBox>
      <svg width="100%" height="438" viewBox="0 0 1744 438" preserveAspectRatio="none" fill="none" role="img" aria-label="Time Remap value graph">
        <path d="M16 0h1714v438H16z" fill="#333" />
        {gridX.map((x) => <path key={x} d={`M${x} 0V438`} stroke="#1b1b1b" strokeWidth="2" />)}
        <path d="M0 194.500H1744" stroke="#1b1b1b" strokeWidth="2" />
        <path d="M16 406H1744" stroke="#1b1b1b" strokeWidth="4" />
        <text x="20" y="190" fill={c.text} fontSize="21">5 seconds</text>
        <text x="20" y="402" fill={c.text} fontSize="21">0</text>
        <path d="M0 408H18C191 408 364 289 537 289C705 289 874 190 1042 190C1220 190 1398 31 1576 31" stroke="#c4c4c4" strokeWidth="3" />
        <path d="M1576 31H1726" stroke="#d0d0d0" strokeWidth="2.500" strokeDasharray="8 4" />
        <path d="M1731 18v8l6 5-6 5v8M1737 31h7" stroke="#c8c8c8" strokeWidth="2.500" />
        <path d="M17 396v8M17 412v8" stroke="#c8c8c8" strokeWidth="2.500" />
        <path d="M7 408l8-7v14zM12 403h10v10H12zM532 285h10v10h-10zM1571 26h10v10h-10z" fill="#d8d8d8" />
      </svg>
    </ChartBox>
  );
}

function GraphPane() {
  return (
    <Graph>
      <NavBar $h={20}><End $w={12} /><Span /><End $w={11} $right /></NavBar>
      <Ruler><Ticks>{Array.from({ length: 10 }, (_, i) => <Tick key={i}>{`0${i}:00f`}</Tick>)}</Ticks></Ruler>
      <NavBar $h={33} $work><End $w={10} /><Span /><End $w={10} $right /></NavBar>
      <Cache />
      <ValueGraph />
      <Expression><LineNo>1</LineNo><Code><b>(</b>No selected properties have expressions<b>)</b></Code></Expression>
      <GraphTools>
        <GraphTool aria-label="Show properties"><Svg w={38} h={32}><P d="M1 14C9 0 26 0 34 14 26 28 9 28 1 14z" /><circle cx="17.500" cy="14" r="7" fill="#282828" /><circle cx="20" cy="12" r="2.500" fill="currentColor" /><P d="M26 26h11l-5 6z" /></Svg></GraphTool>
        <GraphTool aria-label="Graph type"><Svg w={34} h={32}><path d="M2 3h26v21H2z" stroke="currentColor" strokeWidth="2.500" /><P d="M1 1h28v4H1z" /><path d="M7 10h3M13 10h11M7 14.500h3M13 14.500h11M7 19h3M13 19h11" stroke="currentColor" strokeWidth="2" /><P d="M24 27h10l-5 5z" /></Svg></GraphTool>
        <GraphTool $on aria-label="Transform box"><Svg w={32} h={32}><path d="M4 4h24v24H4z" stroke="currentColor" strokeWidth="2.500" /><P d="M1 1h7v7H1zM12.500 1h7v7h-7zM24 1h7v7h-7zM1 12.500h7v7H1zM24 12.500h7v7h-7zM1 24h7v7H1zM12.500 24h7v7h-7zM24 24h7v7h-7zM14.500 14.500h3v3h-3z" /></Svg></GraphTool>
        <GraphTool aria-label="Snap"><Svg w={28} h={30}><path d="M5 24V13c0-13 18-13 18 0v11" stroke="currentColor" strokeWidth="7" /><path d="M5 22v7M23 22v7" stroke="#666" strokeWidth="7" /></Svg></GraphTool>
        <Gap $w={51} />
        <GraphTool $on aria-label="Auto-zoom height"><Svg w={38} h={34}><P s={2.5} d="M5 5v24" /><P d="M5 0l5 7H0zM5 33l5-6H0z" /><circle cx="22" cy="14" r="9.500" stroke="currentColor" strokeWidth="2.500" /><P s={4} d="M29 22l7 9" /></Svg></GraphTool>
        <GraphTool $dim aria-label="Fit selection"><Svg w={34} h={32}><P s={2.2} d="M4 6h28v24H4zM10 1v5M18 1v5M26 1v5M0 12h4M0 19h4M0 26h4M8 12c9 0 7 12 20 12" /></Svg></GraphTool>
        <GraphTool aria-label="Fit all"><Svg w={34} h={32}><P s={2.2} d="M4 6h28v24H4zM10 1v5M18 1v5M26 1v5M0 12h4M0 19h4M0 26h4M6 10c9 0 12 8 24 8M6 16c9 0 12 8 24 8" /></Svg></GraphTool>
        <Gap $w={405} />
        <GraphTool $dim aria-label="Easy ease"><Svg w={36} h={32}><P s={2.5} d="M4 6h24M16 6c8 0 6 20 16 20" /><P d="M11 1h10v10H11zM26 3h6v6h-6z" /></Svg></GraphTool>
        <GraphTool $dim aria-label="Ease in"><Svg w={36} h={32}><P s={2.5} d="M2 26c14 0 10-20 22-20h10M8 6h20" /><P d="M26 1h9v10h-9zM5 3h6v6H5z" /></Svg></GraphTool>
        <GraphTool $dim aria-label="Ease out"><Svg w={36} h={32}><P s={2.5} d="M34 26C22 26 26 6 12 6M6 6h20" /><P d="M1 1h9v10H1zM24 3h6v6h-6z" /></Svg></GraphTool>
      </GraphTools>
    </Graph>
  );
}

function LayerPane() {
  return (
    <Layers>
      <TimelineTabs>
        <CloseX /><Gap $w={20} /><Swatch />
        <Title $before={22} $after={19}>Comp 1</Title><Burger />
      </TimelineTabs>
      <Gap $w={0} />
      <ClockRow>
        <Clock><ClockMain>0:00:05:01</ClockMain>00051 (9.990 fps)</Clock>
        <LayerSearch><Field $h={38}><SearchMenu /><FieldInput aria-label="Search layers" /></Field></LayerSearch>
        <LayerTools>
          <Svg w={34} h={28}><P s={2.5} d="M2 7h18M12 7v14h10" /><P d="M0 4h6v6H0zM20 3h10v8H20zM20 17h10v8H20zM24 22h10l-5 6z" /></Svg>
          <ToolTrio>
            <Svg w={32} h={26}><path d="M0 14h32v12H0z" fill="#5f5f5f" /><P d="M5 12C5 3 10 1 16 1s11 2 11 11l4 3H19v7c0 3-6 3-6 0v-7H1z" /><circle cx="12" cy="8" r="2" fill="#333" /><circle cx="20" cy="8" r="2" fill="#333" /></Svg>
            <FilmFrames w={30} h={28} />
            <Blur s={28} />
          </ToolTrio>
          <GraphIcon />
        </LayerTools>
      </ClockRow>
      <ColumnHead>
        <Cells $pad={6}>
          <Cell aria-label="Video"><Eye s={22} /></Cell>
          <Cell aria-label="Audio"><Svg w={24} h={22}><P d="M0 7h4l6-7v22l-6-7H0z" /><P s={2.5} d="M13 6c3 3 3 7 0 10M17 2c6 5 6 13 0 18" /></Svg></Cell>
          <Cell aria-label="Solo"><Svg w={14} h={14}><circle cx="7" cy="7" r="7" fill="currentColor" /></Svg></Cell>
          <Cell aria-label="Lock"><Svg w={20} h={22}><P d="M1 10h18v12H1z" /><P s={3} d="M5 10V6c0-5 10-5 10 0v4" /><path d="M10 13v6" stroke="#333" strokeWidth="3" /></Svg></Cell>
        </Cells>
        <BarCell $gap={25}><Tag /></BarCell>
        <BarCell>#</BarCell>
        <BarCell>Source Name</BarCell>
        <BarCell>Keys</BarCell>
        <BarCell $gap={4}>
          <Cells>
            <Cell aria-label="Shy"><Shy /></Cell>
            <Cell aria-label="Collapse"><Svg w={22} h={22}><circle cx="11" cy="11" r="4" stroke="currentColor" strokeWidth="2" /><P s={2.2} d="M11 1v4M11 17v4M1 11h4M17 11h4M4 4l3 3M15 15l3 3M18 4l-3 3M7 15l-3 3" /></Svg></Cell>
            <Cell aria-label="Quality"><Svg w={22} h={22}><path d="M1 2h5v4h4v4h4v5h4v5h4" stroke="currentColor" strokeWidth="3" strokeDasharray="5 2" /></Svg></Cell>
            <Cell aria-label="Effects"><Svg w={24} h={24}><P s={2} d="M13 2c-4-2-5 2-6 8L5 19c-1 4-3 4-4 3M3 9h8M12 11c3-1 3 0 4 4s2 4 5 3M22 10c-3 0-9 9-11 9" /></Svg></Cell>
            <Cell aria-label="Frame blend"><FilmFrames /></Cell>
            <Cell aria-label="Motion blur"><Blur /></Cell>
            <Cell aria-label="Adjustment"><Svg w={20} h={20}><circle cx="10" cy="10" r="9" stroke="currentColor" strokeWidth="2" /><P d="M17 3A10 10 0 0 1 3 17z" /></Svg></Cell>
            <Cell aria-label="3D"><Cube /></Cell>
          </Cells>
        </BarCell>
        <BarCell><span>Mode</span><Gap $w={90} /><span>T</span><Gap $w={8} /><span>TrkMat</span></BarCell>
        <BarCell>Parent &amp; Link</BarCell>
        <BarCell />
      </ColumnHead>
      <LayerRow>
        <Cells $pad={6}><Cell $box aria-label="Visible"><Eye s={22} /></Cell><Gap $w={30} /><Cell $box aria-label="Solo off" /><Cell $box aria-label="Unlocked" /></Cells>
        <Cells $pad={12}><ChevronDown /><Gap $w={8} /><Swatch $w={24} $h={26} /></Cells>
        <Cells $pad={13}>1</Cells>
        <Cells $pad={4}><CompIcon /><NameInput defaultValue="Shape Layer 1 Comp 1" aria-label="Layer name" /></Cells>
        <span />
        <Cells $pad={7}><Cell $box aria-label="Shy off"><Shy /></Cell><Cell $box aria-label="Collapse off" /><Cell $box aria-label="Best quality"><Svg w={22} h={24}><P s={2.5} d="M2 22L20 2" /></Svg></Cell><Gap $w={60} /><Cell $box aria-label="Motion blur off" /><Cell $box aria-label="Adjustment off" /><Cell $box aria-label="3D off" /></Cells>
        <Cells $pad={6}><SelectBox $w={142} $h={32}><Select aria-label="Mode"><option>Normal</option></Select><ChevronDown /></SelectBox><Gap $w={5} /><Cell $box aria-label="Preserve transparency" /></Cells>
        <Cells $pad={9}><Spiral /><Gap $w={11} /><SelectBox $w={182} $h={32}><Select aria-label="Parent"><option>None</option></Select><ChevronDown /></SelectBox></Cells>
      </LayerRow>
      <PropRow>
        <Cell as="span" $box><Svg w={26} h={28} color={c.accent}><circle cx="13" cy="16" r="10" stroke="currentColor" strokeWidth="2.500" /><P s={2.5} d="M13 16l5-6M10 1h7M13 1v4M3 5l3 3" /></Svg></Cell>
        <Gap $w={8} />
        <Svg w={24} h={24}><P s={2.2} d="M1 1v21h21M2 18l5-13 5 10 6-9" /></Svg>
        <PropName>Time Remap</PropName>
        <Keys><Svg w={12} h={16}><P d="M12 0v16L0 8z" /></Svg><Svg w={18} h={18}><P s={2} d="M9 1l8 8-8 8-8-8z" /></Svg><Svg w={12} h={16}><P d="M0 0v16l12-8z" /></Svg></Keys>
        <Value>0:00:05:04</Value>
        <Spiral />
      </PropRow>
      <LayerSpace />
    </Layers>
  );
}

function TimelinePanel() {
  return (
    <Timeline>
      <TimelineBody>
        <LayerPane />
        <GraphPane />
        <SideStrip><Svg w={7} h={26}><P d="M0 0h7v26L0 18z" /></Svg><Svg w={12} h={24}><P s={2} d="M12 2L2 20h6M12 12c-5 0-5 10 0 10" /></Svg></SideStrip>
      </TimelineBody>
      <BottomBar>
        <BottomLeft>
          <Svg w={22} h={22}><P s={2} d="M9 8h12v13H9zM5 16V4h13v4M1 13V1h13v3M5 16h4M1 13h4" /><circle cx="15" cy="15" r="2.500" fill="currentColor" /></Svg>
          <Svg w={22} h={22}><path d="M9 9h6c0 4-2 6-6 6z" fill="currentColor" /><circle cx="8" cy="8" r="7" stroke="currentColor" strokeWidth="2" /><P s={2} d="M9 9h12v12H9z" /></Svg>
          <Svg w={22} h={22} color={c.icon}><path d="M7 0h8v22H7z" fill="#666" /><P s={2.5} d="M6 1v6l-4 4 4 4v6M16 1v6l4 4-4 4v6" /></Svg>
          <Zoom>
            <Svg w={20} h={10}><P d="M0 10l6-6 3 3 4-6 7 9z" /></Svg>
            <ZoomRange type="range" min={0} max={100} defaultValue={0} aria-label="Time zoom" />
            <Svg w={36} h={18}><P d="M0 18L12 4l4 2-10 12zM10 18L23 1l13 17z" /></Svg>
          </Zoom>
        </BottomLeft>
      </BottomBar>
      <Popup>
        {popup.map((group, gi) => (
          <React.Fragment key={gi}>
            {gi > 0 && <PopupRule />}
            {group.map(([label, on]) => (
              <li key={label}>
                <PopupItem>
                  <span>{on && <Svg w={20} h={22}><P s={3.2} d="M2 12l5 7L17 3" /></Svg>}</span>
                  {label}
                </PopupItem>
              </li>
            ))}
          </React.Fragment>
        ))}
      </Popup>
    </Timeline>
  );
}

export default function App() {
  return (
    <Shell>
      <Global />
      <TopBars />
      <Workspace>
        <ProjectPanel />
        <Viewer />
        <SideColumn />
      </Workspace>
      <TimelinePanel />
    </Shell>
  );
}
